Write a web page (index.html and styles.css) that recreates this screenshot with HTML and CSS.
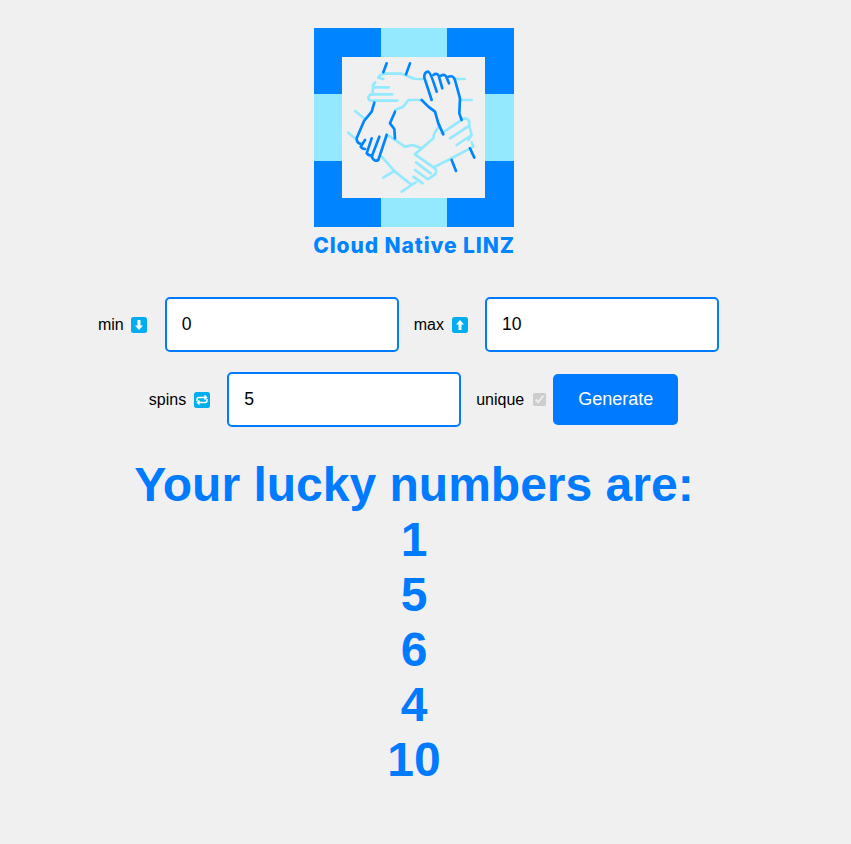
FILE: index.html
```html
<!DOCTYPE html>
<html lang="en">
<head>
    <meta charset="UTF-8">
    <meta name="viewport" content="width=device-width, initial-scale=1.0">
    <title>Cloud Native LINZ - Lucky Numbers</title>
    <link rel="stylesheet" href="styles.css">
</head>
<body>

<div class="page">
    <header class="brand">
        <svg class="logo" viewBox="0 0 200 200" width="200" height="200">
            <!-- frame squares -->
            <rect x="0" y="0" width="200" height="199" fill="#94e9ff"/>
            <rect x="0" y="0" width="67" height="66" fill="#0084ff"/>
            <rect x="133" y="0" width="67" height="66" fill="#0084ff"/>
            <rect x="0" y="133" width="67" height="66" fill="#0084ff"/>
            <rect x="133" y="133" width="67" height="66" fill="#0084ff"/>
            <rect x="28" y="29" width="143" height="141" fill="#f0f0f0"/>
            <!-- hands, drawn in the 3x coordinates of the crop -->
            <g transform="translate(26 27) scale(0.3333)" fill="none" stroke-width="8" stroke-linecap="round" stroke-linejoin="round">
                <g stroke="#94e9ff">
                    <!-- top hand -->
                    <path d="M115 68 Q120 58 135 56 L185 56 L225 72 L250 72 M345 72 L374 72"/>
                    <path d="M115 68 L130 72 M106 82 Q97 90 99 97 L146 97 M100 100 Q95 108 100 118"/>
                    <path d="M157 118 L92 118 Q82 124 86 132 Q88 137 96 137 L172 137"/>
                    <path d="M245 135 L205 135 L190 155 L165 165 M362 135 L395 135"/>
                    <!-- left cuffs -->
                    <path d="M45 168 L75 192 M25 233 L50 255"/>
                    <!-- bottom hand -->
                    <path d="M140 238 L195 275 L218 270 L245 280"/>
                    <path d="M125 305 L165 350 L215 390 L185 410 M160 350 L130 368"/>
                    <path d="M225 298 L285 340 Q295 352 280 362 L265 372"/>
                    <path d="M228 322 L272 355 M225 345 L262 372 M220 365 L248 385 M215 390 L228 382"/>
                    <!-- right hand -->
                    <path d="M300 210 L283 235 L280 250 L225 298"/>
                    <path d="M285 335 L325 315 L400 275 L395 262"/>
                    <path d="M305 235 L372 190 Q392 190 388 212 L330 250"/>
                    <path d="M388 215 L395 240 L350 270 M395 240 L385 255"/>
                </g>
                <g stroke="#0084ff">
                    <path d="M140 25 L130 52 M210 25 L198 58"/>
                    <path d="M275 135 L253 68 Q252 50 265 50 Q272 52 290 110"/>
                    <path d="M280 60 Q290 52 296 62 L307 100 M303 62 Q315 55 320 68 L327 85"/>
                    <path d="M325 65 Q340 60 345 75 L360 130 L358 175 L365 195"/>
                    <path d="M245 135 L265 155 L285 170 L295 205 L310 238"/>
                    <path d="M390 280 L403 308 M335 315 L348 348"/>
                    <path d="M103 143 L95 170 L72 198 L50 250 Q50 264 60 266"/>
                    <path d="M75 255 L62 275 Q66 282 75 282 M95 250 L80 295 Q85 302 95 302"/>
                    <path d="M118 245 L95 305 Q103 322 115 315 L140 240"/>
                    <path d="M165 170 L150 205 L163 222 L165 250"/>
                </g>
            </g>
        </svg>
        <div class="brand-name">Cloud Native LINZ</div>
    </header>

    <form class="controls">
        <div class="row">
            <label class="field-label" for="min">min
                <svg class="emoji" viewBox="0 0 16 16"><rect width="16" height="16" rx="2.500" fill="#00aeef"/><path d="M6.500 3h3v5.500H12L8 13 4 8.500h2.500z" fill="#fff"/></svg>
            </label>
            <input class="num-input" id="min" type="text" value="0">
            <label class="field-label" for="max">max
                <svg class="emoji" viewBox="0 0 16 16"><rect width="16" height="16" rx="2.500" fill="#00aeef"/><path d="M6.500 13h3V7.500H12L8 3 4 7.500h2.500z" fill="#fff"/></svg>
            </label>
            <input class="num-input" id="max" type="text" value="10">
        </div>
        <div class="row">
            <label class="field-label" for="spins">spins
                <svg class="emoji" viewBox="0 0 16 16"><rect width="16" height="16" rx="2.500" fill="#00aeef"/><path d="M3 9V7.500Q3 5.500 5 5.500h7M10.500 3.500l2 2-2 2M13 7v1.500q0 2-2 2H4M5.500 8.500l-2 2 2 2" fill="none" stroke="#fff" stroke-width="1.500"/></svg>
            </label>
            <input class="num-input" id="spins" type="text" value="5">
            <label class="field-label check-label" for="unique">unique</label>
            <input class="check" id="unique" type="checkbox" checked disabled>
            <button class="generate" type="button">Generate</button>
        </div>
    </form>

    <section class="result">
        <div>Your lucky numbers are:</div>
        <div>1</div>
        <div>5</div>
        <div>6</div>
        <div>4</div>
        <div>10</div>
    </section>
</div>

</body>
</html>
```

FILE: styles.css
```css
body {
    font-family: "Liberation Sans", Arial, sans-serif;
    margin: 0;
    padding: 0;
    background-color: #f0f0f0;
    color: #000;
}
.page {
    width: 828px;
    padding-top: 28px;
}
.brand {
    display: flex;
    flex-direction: column;
    align-items: center;
}
.logo {
    display: block;
}
.brand-name {
    margin-top: 6px;
    font-family: Inter, "Liberation Sans", sans-serif;
    font-weight: 800;
    font-size: 21px;
    letter-spacing: 0.9px;
    line-height: 24px;
    color: #0084ff;
    white-space: nowrap;
}
.controls {
    margin-top: 39px;
}
.row {
    display: flex;
    justify-content: center;
    align-items: center;
    margin-bottom: 20px;
}
.field-label {
    display: flex;
    align-items: center;
    gap: 7.500px;
    font-size: 16px;
    margin-right: 17.500px;
}
.check-label {
    margin-right: 9px;
}
.emoji {
    width: 16px;
    height: 16px;
}
.num-input {
    box-sizing: border-box;
    width: 234px;
    height: 55px;
    padding: 0 15px;
    margin-right: 15px;
    font-family: inherit;
    font-size: 17.600px;
    color: #000;
    background-color: #fff;
    border: 2px solid #007bff;
    border-radius: 5px;
}
.row .num-input:last-child {
    margin-right: 11px;
}
.check {
    width: 13px;
    height: 13px;
    margin: 0 7px 0 0;
}
.generate {
    width: 125px;
    height: 51px;
    margin-right: 1px;
    font-family: inherit;
    font-size: 18px;
    color: #fff;
    background-color: #007bff;
    border: none;
    border-radius: 5px;
}
.result {
    margin-top: 30px;
    text-align: center;
    font-size: 48px;
    font-weight: bold;
    color: #007bff;
}
```
